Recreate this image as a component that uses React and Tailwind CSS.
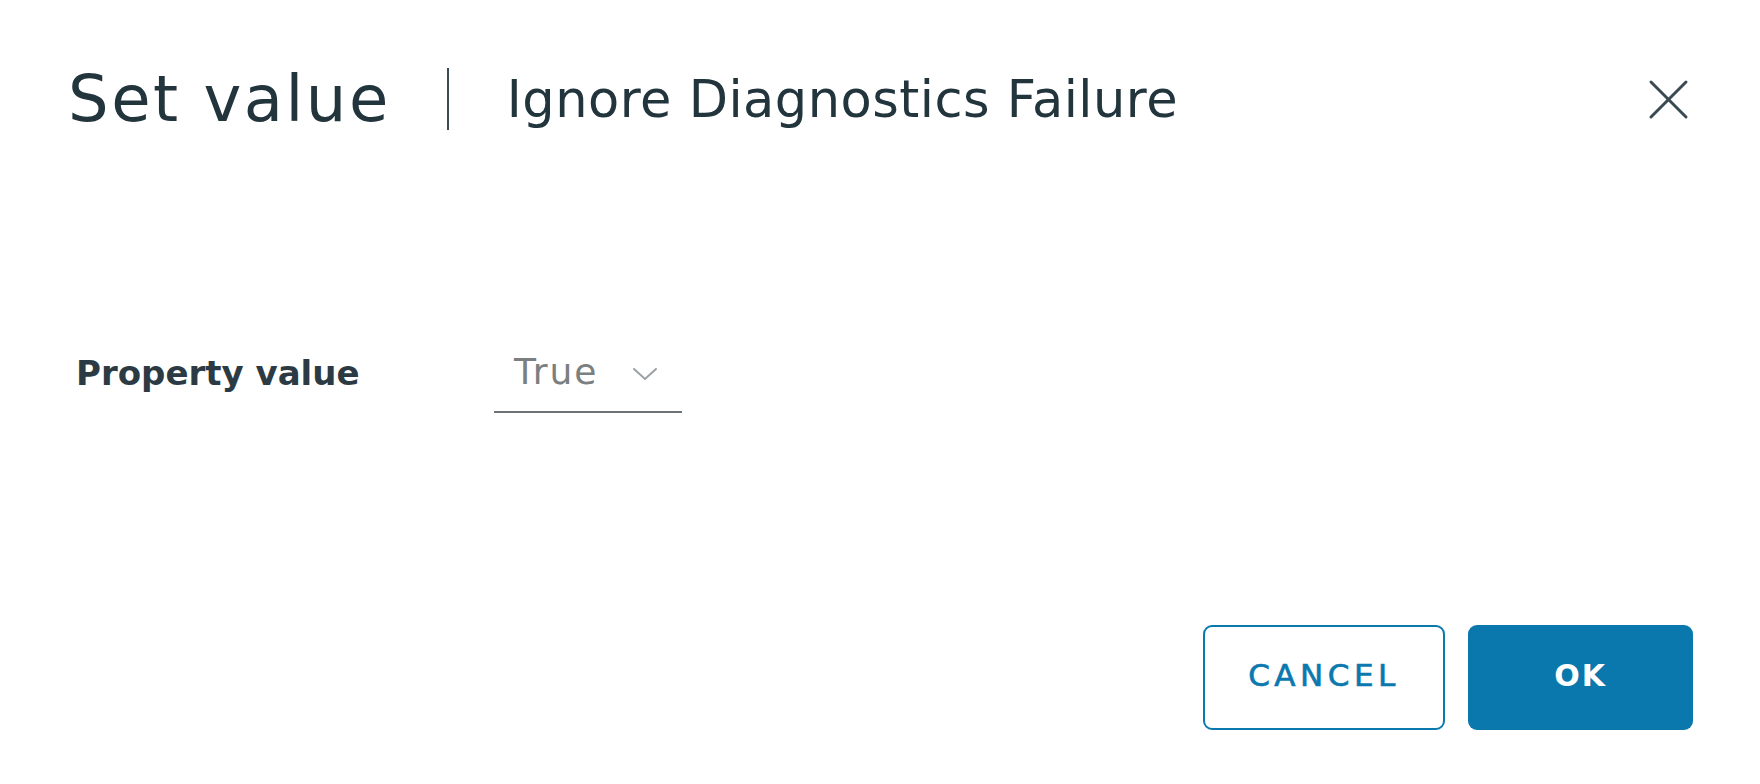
import React from 'react';

const font = { fontFamily: '"DejaVu Sans", "Open Sans", sans-serif' };

const CloseIcon = () => (
  <svg width="41" height="41" viewBox="0 0 41 41" fill="none" stroke="#3b4a52" strokeWidth="3" strokeLinecap="round">
    <line x1="3" y1="3" x2="38" y2="38" />
    <line x1="38" y1="3" x2="3" y2="38" />
  </svg>
);

const Chevron = () => (
  <svg width="26" height="14" viewBox="0 0 26 14" fill="none" stroke="#9aa0a4" strokeWidth="2" strokeLinecap="round">
    <polyline points="2,2 13,12 24,2" />
  </svg>
);

export default function App() {
  return (
    <div className="w-[1760px] h-[784px] bg-white flex flex-col pl-[68px] pr-[67px] text-[#22343c]" style={font}>
      {/* Header */}
      <div className="flex items-center h-[80px] mt-[59px]">
        <h2 className="text-[64px] leading-none font-normal tracking-[2.5px]">Set value</h2>
        <div className="w-[2px] h-[62px] bg-[#3b4a52] ml-[56px] mr-[58px]" />
        <h3 className="text-[51px] leading-none font-normal tracking-[0.5px]">Ignore Diagnostics Failure</h3>
        <button className="ml-auto mr-[4px]">
          <CloseIcon />
        </button>
      </div>

      {/* Body */}
      <div className="flex items-start mt-[206px]">
        <label className="w-[426px] h-[56px] pl-[8px] flex items-center text-[34px] font-bold text-[#2c3b43]">Property value</label>
        <div className="w-[188px] h-[68px] pb-[12px] border-b-2 border-[#6b7378] flex items-center pl-[20px] pr-[24px]">
          <span className="text-[36px] tracking-[2px] text-[#7b7f82]">True</span>
          <span className="ml-auto mt-[4px]"><Chevron /></span>
        </div>
      </div>

      {/* Footer */}
      <div className="flex justify-end gap-[23px] mt-auto mb-[54px]">
        <button className="w-[242px] h-[105px] pb-[4px] rounded-[9px] border-2 border-[#0b79b0] text-[#0b79b0] text-[31px] font-normal tracking-[4.5px] [-webkit-text-stroke:0.7px_#0b79b0]">
          CANCEL
        </button>
        <button className="w-[225px] h-[105px] pb-[4px] rounded-[9px] bg-[#0a77ad] text-white text-[30px] font-bold tracking-[2px]">
          OK
        </button>
      </div>
    </div>
  );
}
